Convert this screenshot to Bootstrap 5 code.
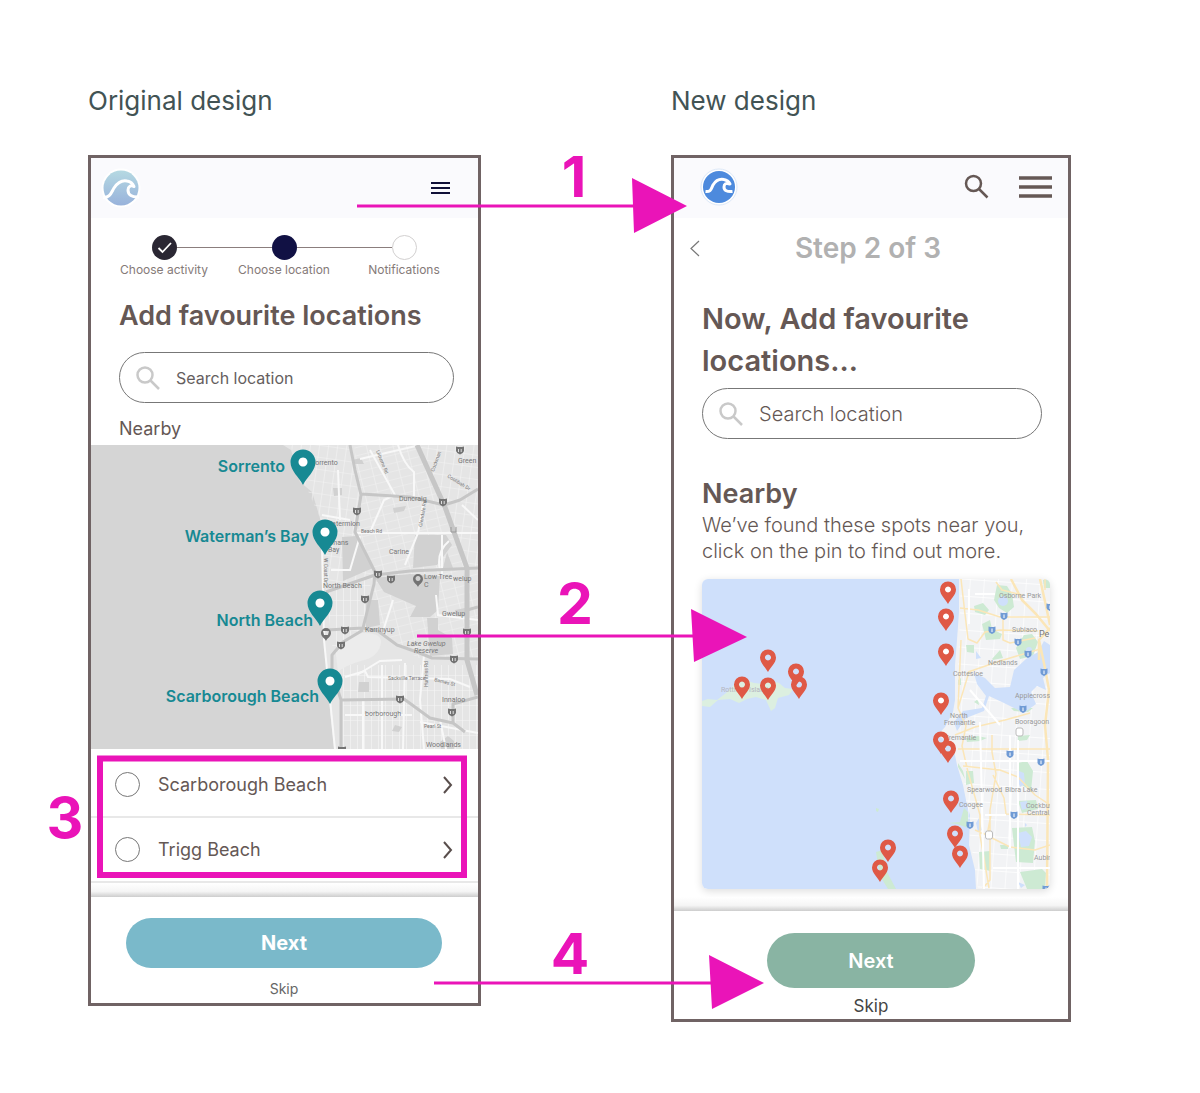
<!DOCTYPE html>
<html lang="en">
<head>
<meta charset="utf-8">
<meta name="viewport" content="width=device-width, initial-scale=1">
<title>Favourite locations – original and new design</title>
<link rel="stylesheet" href="https://cdn.jsdelivr.net/npm/bootstrap@5.3.0/dist/css/bootstrap.min.css">
<style>
  :root { --ink: #655855; --pink: #ea14b8; --teal: #178993; }
  body { font-family: Inter, "Liberation Sans", sans-serif; color: var(--ink); background: #fff; }
  .board { padding: 80px 129px 71px 88px; }
  .design-old { flex: 393 1 0; min-width: 0; }
  .design-new { flex: 400 1 0; min-width: 0; }
  .board-gap { flex: 190 1 0; }
  .design-title { font-size: 26px; line-height: 41px; font-weight: 400; color: #425354; margin: 0 0 34px; white-space: nowrap; }
  .phone { border: 3px solid #706364; background: #fff; }
  .topbar { height: 60px; background: #fafafd; }
  .topbar-new { padding-bottom: 3px; }
  .icon-btn { border: 0; padding: 0; background: none; display: flex; color: inherit; }
  .steps { padding: 17px 14px 0 13px; }
  .step-line { height: 1px; background: #8b7e7d; flex: 1; }
  .step-line.off { background: none; }
  .step-dot { width: 25px; height: 25px; border-radius: 50%; background: #111144; }
  .step-dot.done { background: #2a2733; }
  .step-dot.todo { background: #fff; border: 1px solid #d2d0d0; }
  .step-label { font-size: 12px; line-height: 20px; color: #857a78; }
  .old-body { padding: 18px 24px 0 28px; }
  .new-body { padding: 32px 18px 0 28px; }
  .search-pill { border: 1px solid #777; border-radius: 26px; height: 51px; padding: 0 16px; }
  .search-pill input { border: 0; outline: 0; background: none; min-width: 0; flex: 1; padding: 0; }
  .old-h { font-size: 27px; line-height: 36px; font-weight: 600; margin: 0 0 18px; }
  .old-input, .old-input::placeholder { font-size: 16px; color: #655e5e; opacity: 1; }
  .new-input, .new-input::placeholder { font-size: 20px; font-weight: 300; color: #655855; opacity: 1; }
  .old-near { font-size: 18px; line-height: 24px; font-weight: 400; margin: 14px 0 4px; }
  .map-svg { display: block; width: 100%; }
  .spot { height: 65px; border-bottom: 2px solid #e8e8e8; padding: 0 24px; font-size: 18px; }
  .spot .form-check-input { width: 25px; height: 25px; border: 1px solid #777; margin: 0 18px 0 0; }
  .foot-shade { height: 14px; background: linear-gradient(#fff, #f5f5f5 60%, #cdcdcd); }
  .foot-old { padding: 21px 36px 3px 35px; }
  .foot-new { padding: 22px 0 3px; }
  .next-old { height: 50px; border-radius: 25px; background: #7ab9ca; color: #fff; font-size: 20px; font-weight: 700; border: 0; }
  .next-new { height: 55px; width: 208px; border-radius: 28px; background: #89b4a3; color: #fff; font-size: 20px; font-weight: 600; border: 0; }
  .skip-old { font-size: 14px; line-height: 20px; color: #666; text-decoration: none; }
  .skip-new { font-size: 17px; line-height: 20px; color: #444; text-decoration: none; }
  .step-row { padding: 12px 32px 0 16px; }
  .step-count { font-size: 28px; line-height: 36px; font-weight: 600; color: #b1b1b1; }
  .new-h { font-size: 29px; line-height: 42px; font-weight: 600; margin: 0 0 6px; white-space: nowrap; }
  .new-near { font-size: 27px; line-height: 32px; font-weight: 600; margin: 39px 0 2px; }
  .new-copy { font-size: 20px; line-height: 26px; font-weight: 300; white-space: nowrap; margin: 0 0 15px; }
  .map-card { border-radius: 6px; overflow: hidden; box-shadow: 0 2px 8px rgba(0,0,0,.14); }
  .notes { pointer-events: none; }
  .gap-search { margin-right: 30px; }
  svg text { font-family: Inter, "Liberation Sans", sans-serif; }
  .places text { font-family: Roboto, "Liberation Sans", sans-serif; }
</style>
<script src="https://cdn.jsdelivr.net/npm/bootstrap@5.3.0/dist/js/bootstrap.bundle.min.js"></script>
</head>
<body>
<main class="board position-relative d-flex align-items-start">

  <section class="design-old">
    <h2 class="design-title">Original design</h2>
    <div class="phone">
      <header class="topbar d-flex align-items-center justify-content-between ps-2 pe-4">
        <svg width="44" height="44" viewBox="-22 -22 44 44" role="img" aria-label="Wave logo">
          <defs><linearGradient id="sea" x2="0" y2="1"><stop offset="0" stop-color="#b5d9e2"/><stop offset="1" stop-color="#98b2db"/></linearGradient></defs>
          <circle r="19.500" fill="#fff"/><circle r="17.500" fill="url(#sea)"/>
          <path d="M-18 9.500C-11 10-10 5-7 0C-3-6 1-8 6-7C10-6.500 12-4 13-1.500C10-3.500 7-1.500 7 2C7 7 11 9.500 18 9" fill="none" stroke="#fff" stroke-width="3" stroke-linejoin="round"/>
        </svg>
        <button class="icon-btn me-1" aria-label="Menu"><svg width="19" height="14" viewBox="0 0 19 14" stroke="#101038" stroke-width="2"><path d="M0 2h19M0 7h19M0 12h19"/></svg></button>
      </header>

      <ol class="steps list-unstyled d-flex mb-0 text-center">
        <li class="flex-fill w-100"><div class="d-flex align-items-center"><span class="step-line off"></span><span class="step-dot done d-flex"><svg width="25" height="25" viewBox="0 0 25 25" fill="none" stroke="#fff" stroke-width="1.800"><path d="M6.500 13l4 4L19 8"/></svg></span><span class="step-line"></span></div><div class="step-label">Choose activity</div></li>
        <li class="flex-fill w-100"><div class="d-flex align-items-center"><span class="step-line"></span><span class="step-dot"></span><span class="step-line"></span></div><div class="step-label">Choose location</div></li>
        <li class="flex-fill w-100"><div class="d-flex align-items-center"><span class="step-line"></span><span class="step-dot todo"></span><span class="step-line off"></span></div><div class="step-label">Notifications</div></li>
      </ol>

      <div class="old-body">
        <h1 class="old-h">Add favourite locations</h1>
        <label class="search-pill d-flex align-items-center gap-3">
          <svg width="24" height="24" viewBox="0 0 24 24" fill="none" stroke="#c9c9c9" stroke-width="2.500"><circle cx="9" cy="9" r="7.500"/><path d="M14.500 14.500L23 23"/></svg>
          <input class="old-input" type="search" placeholder="Search location" aria-label="Search location">
        </label>
        <h3 class="old-near">Nearby</h3>
      </div>

      <svg class="map-svg" viewBox="91 445 387 304" role="img" aria-label="Map of nearby beaches">
        <defs>
          <pattern id="g1" width="9" height="12" patternUnits="userSpaceOnUse" patternTransform="rotate(8)"><path d="M0 0H9M0 0V12" stroke="#f4f4f4" stroke-width="1.200"/></pattern>
          <pattern id="g2" width="13" height="8" patternUnits="userSpaceOnUse" patternTransform="rotate(-14)"><path d="M0 0H13M0 0V8" stroke="#f2f2f2" stroke-width="1.200"/></pattern>
          <pattern id="g3" width="7" height="15" patternUnits="userSpaceOnUse"><path d="M0 0H7M0 0V15" stroke="#f5f5f5" stroke-width="1.200"/></pattern>
          <path id="pinA" fill-rule="evenodd" d="M0 0C-4-8-12.500-14-12.500-23A12.500 12.500 0 0 1 12.500-23C12.500-14 4-8 0 0ZM0-27.500a4.500 4.500 0 1 0 .01 0Z"/>
          <g id="sh"><path d="M-4-3.500Q0-2.500 4-3.500V1Q3 4 0 4.500Q-3 4-4 1Z"/><path d="M-1.500-1V2M1.200-1V2" stroke="#ddd"/></g>
        </defs>
        <path fill="#d5d5d5" d="M91 445H478V749H91Z"/>
        <path fill="#e5e5e5" d="M283 445L291 450L300 482L312 492L320 518L321 545L323 590L324 630L327 680L334 749H478V445Z"/>
        <path fill="url(#g1)" d="M290 445H352L360 495L354 532L375 573L326 590L321 545L320 518L304 482Z"/>
        <path fill="url(#g2)" d="M354 445H417L445 507L467 568L478 568V658H417L380 632L363 628L375 573L354 532L360 495Z"/>
        <path fill="url(#g3)" d="M326 592L372 576L363 630L343 642L334 660ZM343 665H478V749H343Z"/>
        <path fill="url(#g1)" d="M420 445H478V490L446 505ZM446 507L478 492V568H466Z"/>
        <g fill="#d1d1d1">
          <path d="M342 537L357 536L373 568L343 581ZM415 535H446L452 545L437 565L413 568ZM375 578L410 574L440 576L438 610L430 617L410 617L416 606L384 592ZM366 600H378L380 625L366 628ZM427 618H438V630L452 638L453 654L430 656ZM455 610l10-2v8l-9 1ZM333 488h9v7l-8 1ZM393 508l13-2-2 5-10 2ZM388 575h18v11h-15ZM359 682h10v10h-11ZM440 742l8-6 6 5v8h-13ZM395 725l7 2-3 5-7-1ZM352 460l9-2 3 6h-10ZM447 552l6 16h-10Z"/>
        </g>
        <path fill="#ececec" d="M336 655Q340 640 362 633Q382 632 381 643Q379 657 361 661Q346 665 338 672Z"/>
        <g fill="none" stroke="#f8f8f8" stroke-width="2">
          <path d="M354 533H478M322 545L324 640L335 749M360 459L420 445M370 450L395 495L384 500L371 530M398 445Q404 465 414 472V499M424 500L418 533L405 565M331 570H350L360 536M442 535V575M384 628L393 600M424 655L420 700L424 749M345 677L365 671L368 677L450 679L470 687M405 663L403 749M345 715H412M440 570Q436 552 449 541"/>
          <path d="M363 699V749M382 665V749M440 720L446 749M350 520L322 515M338 470L340 520M402 660L380 661L357 675M462 505L478 520M420 722L478 733M436 595L438 615L478 620"/>
        </g>
        <g fill="none" stroke="#c6c6c6" stroke-width="3" stroke-linejoin="round">
          <path d="M350 445L355 470L361 495L355 532L375 572L374 584L363 628M361 494L410 497L444 505L460 500L478 489M326 592L375 575L410 571L478 568M327 630L363 628L378 631L397 645L417 652L432 658L478 659M332 672L332 655L343 642L363 630M332 672L341 700V749M342 700L404 699L430 718L453 723L465 732M453 723V704L478 697M467 610L478 607"/>
          <path stroke-width="5" d="M417 445L445 507L467 568L467 660L477 695"/>
        </g>
        <g fill="#737373">
          <use href="#sh" x="460" y="450"/><use href="#sh" x="443" y="502"/><use href="#sh" x="357" y="511"/><use href="#sh" x="378" y="574"/><use href="#sh" x="391" y="579"/><use href="#sh" x="365" y="599"/><use href="#sh" x="345" y="630"/><use href="#sh" x="341" y="645"/><use href="#sh" x="467" y="632"/><use href="#sh" x="454" y="659"/><use href="#sh" x="400" y="699"/><use href="#sh" x="452" y="712"/><use href="#sh" x="342" y="750"/>
          <path fill-rule="evenodd" d="M418 587c-1-3-5-4-5-8a5 5 0 0 1 10 0c0 4-4 5-5 8ZM418 576a2.500 2.500 0 1 0 .01 0ZM326 641c-1-3-5-4-5-8a5 5 0 0 1 10 0c0 4-4 5-5 8ZM323 631h6l-1 4h-4Z"/>
        </g>
        <path d="M451 527v5h5v-5" fill="none" stroke="#999"/>
        <g class="places" font-size="7" fill="#777">
          <text x="311" y="465">Sorrento</text><text x="326" y="526">Watermion</text><text x="331" y="545">mans</text><text x="328" y="552">Bay</text><text x="323" y="588">North Beach</text>
          <text x="399" y="501">Duncraig</text><text x="389" y="554">Carine</text><text x="458" y="463">Green</text><text x="424" y="579">Low Tree</text><text x="453" y="581">welup</text><text x="424" y="587">C</text>
          <text x="442" y="616">Gwelup</text><text x="365" y="632">Karrinyup</text><text x="407" y="646" font-style="italic">Lake Gwelup</text><text x="414" y="653" font-style="italic">Reserve</text>
          <text x="442" y="702">Innaloo</text><text x="365" y="716">borborough</text><text x="426" y="747">Woodlands</text>
        </g>
        <g class="places" font-size="5" fill="#777">
          <text x="361" y="533">Beach Rd</text><text x="388" y="680">Sackville Terrace</text><text x="424" y="728">Pearl St</text><text transform="translate(428 687) rotate(-90)">Huntriss Rd</text><text transform="translate(434 681) rotate(14)">Barnes St</text><text transform="translate(376 451) rotate(68)">Lilburne Rd</text><text transform="translate(422 527) rotate(-80)">Glendale Rd</text><text transform="translate(447 477) rotate(32)">Coolibah Dr</text><text transform="translate(324 558) rotate(90)">W Coast Dr</text><text transform="translate(434 472) rotate(-70)">Cockman</text>
        </g>
        <g fill="#fff"><circle cx="303" cy="462" r="5"/><circle cx="325" cy="532" r="5"/><circle cx="320" cy="603" r="5"/><circle cx="330" cy="681" r="5"/></g>
        <g fill="#178993"><use href="#pinA" x="303" y="485"/><use href="#pinA" x="325" y="555"/><use href="#pinA" x="320" y="626"/><use href="#pinA" x="330" y="704"/></g>
        <g fill="#178993" font-size="16" font-weight="600" text-anchor="end">
          <text x="285" y="472">Sorrento</text><text x="309" y="542">Waterman’s Bay</text><text x="313" y="626">North Beach</text><text x="319" y="702">Scarborough Beach</text>
        </g>
      </svg>

      <div class="pt-1">
        <div class="spot d-flex align-items-center"><input class="form-check-input" type="radio" name="spot" id="s1"><label class="flex-fill" for="s1">Scarborough Beach</label><button class="icon-btn" aria-label="Open Scarborough Beach"><svg width="12" height="18" viewBox="0 0 12 18" fill="none" stroke="#594e4c" stroke-width="2"><path d="M2 1l7 8-7 8"/></svg></button></div>
        <div class="spot d-flex align-items-center"><input class="form-check-input" type="radio" name="spot" id="s2"><label class="flex-fill" for="s2">Trigg Beach</label><button class="icon-btn" aria-label="Open Trigg Beach"><svg width="12" height="18" viewBox="0 0 12 18" fill="none" stroke="#594e4c" stroke-width="2"><path d="M2 1l7 8-7 8"/></svg></button></div>
      </div>
      <div class="foot-shade"></div>
      <footer class="foot-old text-center">
        <button class="next-old w-100 d-block mb-2">Next</button>
        <a class="skip-old" href="#skip">Skip</a>
      </footer>
    </div>
  </section>

  <div class="board-gap"></div>

  <section class="design-new">
    <h2 class="design-title">New design</h2>
    <div class="phone">
      <header class="topbar topbar-new d-flex align-items-center ps-4 pe-3">
        <svg width="42" height="42" viewBox="-21 -21 42 42" role="img" aria-label="Wave logo">
          <circle r="18" fill="#fff" stroke="#dce8f8"/><circle r="16" fill="#4d8add"/>
          <path d="M-13.500 4.500C-8 5-8 2-6-2C-3-7 0-8.500 5-7.500C8-7 10-5 11-3C7-4.500 5-3 5 0C5 3.500 8 5 13.500 4.500" fill="none" stroke="#fff" stroke-width="3" stroke-linejoin="round"/>
        </svg>
        <button class="icon-btn ms-auto gap-search" aria-label="Search"><svg width="25" height="25" viewBox="0 0 25 25" fill="none" stroke="#655855" stroke-width="2.500"><circle cx="9.500" cy="9.500" r="7.500"/><path d="M15 15l8.500 8.500"/></svg></button>
        <button class="icon-btn" aria-label="Menu"><svg width="33" height="24" viewBox="0 0 33 24" stroke="#655855" stroke-width="3.500"><path d="M0 3h33M0 12h33M0 21h33"/></svg></button>
      </header>

      <div class="step-row d-flex align-items-center">
        <button class="icon-btn" aria-label="Back"><svg width="10" height="17" viewBox="0 0 10 17" fill="none" stroke="#777" stroke-width="1.200"><path d="M9 1L1 8.500 9 16"/></svg></button>
        <div class="step-count flex-fill text-center">Step 2 of 3</div>
      </div>

      <div class="new-body">
        <h1 class="new-h">Now, Add favourite<br>locations…</h1>
        <label class="search-pill d-flex align-items-center gap-3 me-2">
          <svg width="24" height="24" viewBox="0 0 24 24" fill="none" stroke="#c9c9c9" stroke-width="2.500"><circle cx="9" cy="9" r="7.500"/><path d="M14.500 14.500L23 23"/></svg>
          <input class="new-input" type="search" placeholder="Search location" aria-label="Search location">
        </label>
        <h3 class="new-near">Nearby</h3>
        <p class="new-copy">We’ve found these spots near you,<br>click on the pin to find out more.</p>

        <div class="map-card">
        <svg class="map-svg" viewBox="702 579 348 310" role="img" aria-label="Map of spots near Perth">
          <defs>
            <pattern id="g4" width="14" height="17" patternUnits="userSpaceOnUse" patternTransform="rotate(4)"><path d="M0 0H14M0 0V17" stroke="#fff" stroke-width="1.300"/></pattern>
            <path id="pinB" fill-rule="evenodd" d="M0 0C-2.500-5-8-9-8-14.500A8 8 0 0 1 8-14.500C8-9 2.500-5 0 0ZM0-17.500a3 3 0 1 0 .01 0Z"/>
            <g id="sb"><path d="M-3.500-3.500Q0-2.500 3.500-3.500V1Q3 3 0 4Q-3 3-3.500 1Z"/><path d="M0-1.500V2" stroke="#fff"/></g>
          </defs>
          <path fill="#cfe0fb" d="M702 579H1050V889H702Z"/>
          <path fill="#f2f3f5" d="M959 579V612L957 640L955 665V700L953 712L945 727L938 735L946 741L953 745L957 765L963 785L967 805L970 815L969 845L975 870L976 889H1050V579Z"/>
          <path fill="url(#g4)" d="M961 579H1050V889H978L969 830L963 770L957 700Z"/>
          <g fill="#cdead3">
            <path d="M974 606l9-3 6 7-4 5-10-3ZM994 600l3-15 10 1 5 8 2 13-7 6-8-5ZM982 624l8-4 2 9 10 5-2 5-14 1ZM1016 648l8-13 8-1 6 8-5 14-13 3ZM966 645h8v8l-7-1ZM992 659l8-9 3 8-10 2ZM974 702l4-3 1 6ZM958 680l3-2v7h-3ZM1011 708h22l-5 4-14-1ZM1043 580l7-1v9h-6Z"/>
            <path d="M948 823L960 822L964 808L968 812V828L957 824ZM966 738l12-2 9 2-7 3-13 1ZM958 763l5 8 2 8-7-12ZM966 771h7l1 12-8 2ZM1018 763l9-2 6 10-2 20-12-8ZM1018 801l18-1 2 9-16 4ZM1012 828l20-1 3 14-2 22-17-1ZM979 852l11-1v20l-10-2ZM1020 872l22-3 4 4-1 16h-18ZM1000 845h8v4h-7ZM1018 736l12-1-3 5-9 1Z"/>
            <path fill="#dcefe0" d="M702 701l6-2 9 1 9-7 9-9 10-4 9 3 10 1 3-4 12 3 6 5 8 1-4 6-11 3-3 10-4 3-5-11-10-3-9 2-8 4-9-4-12 1-8 7-8-1Z"/>
            <path d="M876 852l7-2 3 20 10 19h-8l-8-13ZM876 808l3 1-1 3-2-1Z"/>
          </g>
          <g fill="#cfe0fb">
            <path d="M954 722L963 711L982 708L986 696L977 684L974 673L985 678L995 688L1010 687L1014 670L1026 659L1038 652L1044 641L1050 645V673L1043 678L1046 690L1037 686L1031 692L1036 704L1024 713L1004 703L989 696L984 711L966 718L957 731Z"/>
            <circle cx="1003" cy="601" r="5"/><circle cx="1029" cy="650" r="3"/><path d="M1019 771l5 2 1 11-5 3-2-6ZM1020 802l7-1 1 7-6 2ZM1018 833l8-2 6 6-3 9-8 1ZM979 818l3 12-4 2-2-9ZM1018 882l7 3-4 3ZM976 651l5 7-5 1ZM1025 823l2 2-2 2Z"/>
          </g>
          <g fill="none" stroke="#fbe6b8" stroke-width="1.500" stroke-linejoin="round">
            <path stroke-width="2.500" d="M1011 579L1022 600L1036 614L1050 631M1039 660V640L1050 628M1039 640L1045 668L1049 690L1045 725L1048 760L1047 889M1040 579L1046 606L1050 625"/>
            <path d="M960 608L978 610L1000 617L1050 617M961 579L965 614L968 639L977 643L985 632L1000 630L1038 631M1003 617V640L1010 643L1035 638M996 582L1002 590L1022 595M961 640L958 708L966 726L962 746L968 772L980 815V835L989 888M969 672L958 708M968 672L1000 661L1040 649M955 735L975 727L1005 720L1030 713M992 735V752L996 774L990 810V880L983 888M958 749H1050M963 766L1000 770L1018 777M993 775L1004 798L1006 814L1050 815M991 815L988 830L992 838L1010 847L1035 850L1050 845M1018 777L1035 795L1050 805M975 830L987 835M1045 590V579"/>
          </g>
          <g fill="none" stroke="#fff" stroke-width="2"><path d="M980 722L984 889M960 761H1050M1010 735V848M993 868H1050M975 594H995M970 690L1000 725M1018 740V889M985 815H1006M969 624V589"/></g>
          <g fill="#709bd5">
            <use href="#sb" x="1004" y="616"/><use href="#sb" x="992" y="630"/><use href="#sb" x="1018" y="642"/><use href="#sb" x="1028" y="654"/><use href="#sb" x="1044" y="672"/><use href="#sb" x="1023" y="709"/><use href="#sb" x="1010" y="754"/><use href="#sb" x="1041" y="762"/><use href="#sb" x="1014" y="815"/><use href="#sb" x="970" y="825"/><use href="#sb" x="1046" y="889"/><use href="#sb" x="1050" y="607"/>
          </g>
          <g fill="#fff" stroke="#bbb" stroke-width="1"><rect x="1016" y="728" width="7" height="8" rx="2"/><rect x="985.500" y="831" width="7" height="8" rx="2"/></g>
          <g class="places" font-size="7" fill="#999">
            <text x="999" y="598">Osborne Park</text><text x="1012" y="632">Subiaco</text><text x="988" y="665">Nedlands</text><text x="953" y="676">Cottesloe</text><text x="1015" y="698">Applecross</text><text x="1015" y="724">Booragoon</text><text x="950" y="718">North</text><text x="944" y="725">Fremantle</text><text x="945" y="740">Fremantle</text><text x="967" y="792">Spearwood</text><text x="1005" y="792">Bibra Lake</text><text x="959" y="807">Coogee</text><text x="1026" y="808">Cockbur</text><text x="1027" y="815">Central</text><text x="1034" y="860">Aubin</text><text x="721" y="692" fill="#b5b5c0">Rottnest Island</text>
            <text x="1039" y="637" font-size="9" fill="#777">Pe</text>
          </g>
          <g fill="#fff"><circle cx="948" cy="589" r="4"/><circle cx="946" cy="616" r="4"/><circle cx="946" cy="651" r="4"/><circle cx="941" cy="700" r="4"/></g>
          <g fill="#df5946">
            <use href="#pinB" x="948" y="604"/><use href="#pinB" x="946" y="631"/><use href="#pinB" x="946" y="666"/><use href="#pinB" x="941" y="715"/><use href="#pinB" x="941" y="754"/><use href="#pinB" x="948" y="763"/><use href="#pinB" x="951" y="813"/><use href="#pinB" x="955" y="848"/><use href="#pinB" x="960" y="868"/><use href="#pinB" x="888" y="862"/><use href="#pinB" x="880" y="882"/><use href="#pinB" x="768" y="672"/><use href="#pinB" x="796" y="686"/><use href="#pinB" x="742" y="699"/><use href="#pinB" x="768" y="700"/><use href="#pinB" x="799" y="699"/>
          </g>
        </svg>
        </div>
      </div>
      <div class="foot-shade mt-2"></div>
      <footer class="foot-new text-center">
        <button class="next-new d-block mx-auto mb-2">Next</button>
        <a class="skip-new d-block" href="#skip">Skip</a>
      </footer>
    </div>
  </section>

  <svg class="notes position-absolute top-0 start-0 w-100" viewBox="0 0 1200 1093" aria-label="Numbered changes between the designs">
    <g stroke="#ea14b8" stroke-width="3" fill="none"><path d="M357 206H634M417 636H694M434 983H712"/><path stroke-width="6" d="M100 758.500H464V875H100Z"/></g>
    <path fill="#ea14b8" d="M632 178L687 206L634 233ZM691 609L747 637L694 662ZM709 955L764 983L712 1009Z"/>
    <g fill="#ea14b8" font-size="57" font-weight="700" text-anchor="middle"><text x="574" y="197">1</text><text x="575" y="624">2</text><text x="65" y="838">3</text><text x="570" y="974">4</text></g>
  </svg>
</main>
</body>
</html>
